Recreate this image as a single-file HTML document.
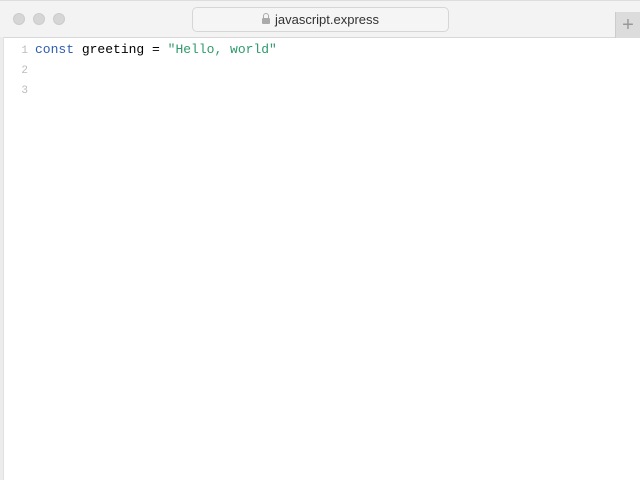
<!DOCTYPE html>
<html><head><style>
body{margin:0;width:640px;height:480px;overflow:hidden;background:#fff;font-family:"Liberation Sans",sans-serif;position:relative}
.top{position:absolute;left:0;top:0;width:640px;height:38px;background:#f3f3f3;border-bottom:1px solid #d8d8d8;box-sizing:border-box;border-top:1px solid #ddd}
.dot{position:absolute;top:12px;width:12px;height:12px;border-radius:50%;background:#d6d6d6;border:1px solid #ccc;box-sizing:border-box}
.url{position:absolute;left:192px;top:6px;width:257px;height:25px;border:1px solid #d6d6d6;border-radius:5px;background:#f5f5f5;box-sizing:border-box;text-align:center;font-size:13px;line-height:23px;color:#333}
.lock{display:inline-block;width:8px;height:6px;background:#aaa;border-radius:1px;position:relative;margin-right:5px;vertical-align:0px}
.lock:before{content:"";position:absolute;left:1px;top:-5px;width:4px;height:5px;border:1px solid #aaa;border-bottom:none;border-radius:3px 3px 0 0}
.plus{position:absolute;left:615px;top:11px;width:25px;height:26px;background:#dcdcdc;border-left:1px solid #ccc;box-sizing:border-box;color:#999;font-size:20px;line-height:26px;text-align:center;font-weight:200}
.side{position:absolute;left:0;top:37px;width:4px;height:443px;background:#ececec;border-right:1px solid #e0e0e0;box-sizing:border-box}
.code{position:absolute;left:0;top:40px;font-family:"Liberation Mono",monospace;font-size:13px}
.ln{height:20px;line-height:20px;white-space:pre}
.n{display:inline-block;width:35px;text-align:right;color:#bbb;font-size:11px;padding-right:7px;box-sizing:border-box}
.k{color:#2f5db0}.s{color:#2e9a6a}
</style></head><body>
<div class="top">
<div class="dot" style="left:13px"></div><div class="dot" style="left:33px"></div><div class="dot" style="left:53px"></div>
<div class="url"><span class="lock"></span>javascript.express</div>
<div class="plus">+</div>
</div>
<div class="side"></div>
<div class="code">
<div class="ln"><span class="n">1</span><span class="k">const</span> greeting = <span class="s">"Hello, world"</span></div>
<div class="ln"><span class="n">2</span></div>
<div class="ln"><span class="n">3</span></div>
</div>
</body></html>
